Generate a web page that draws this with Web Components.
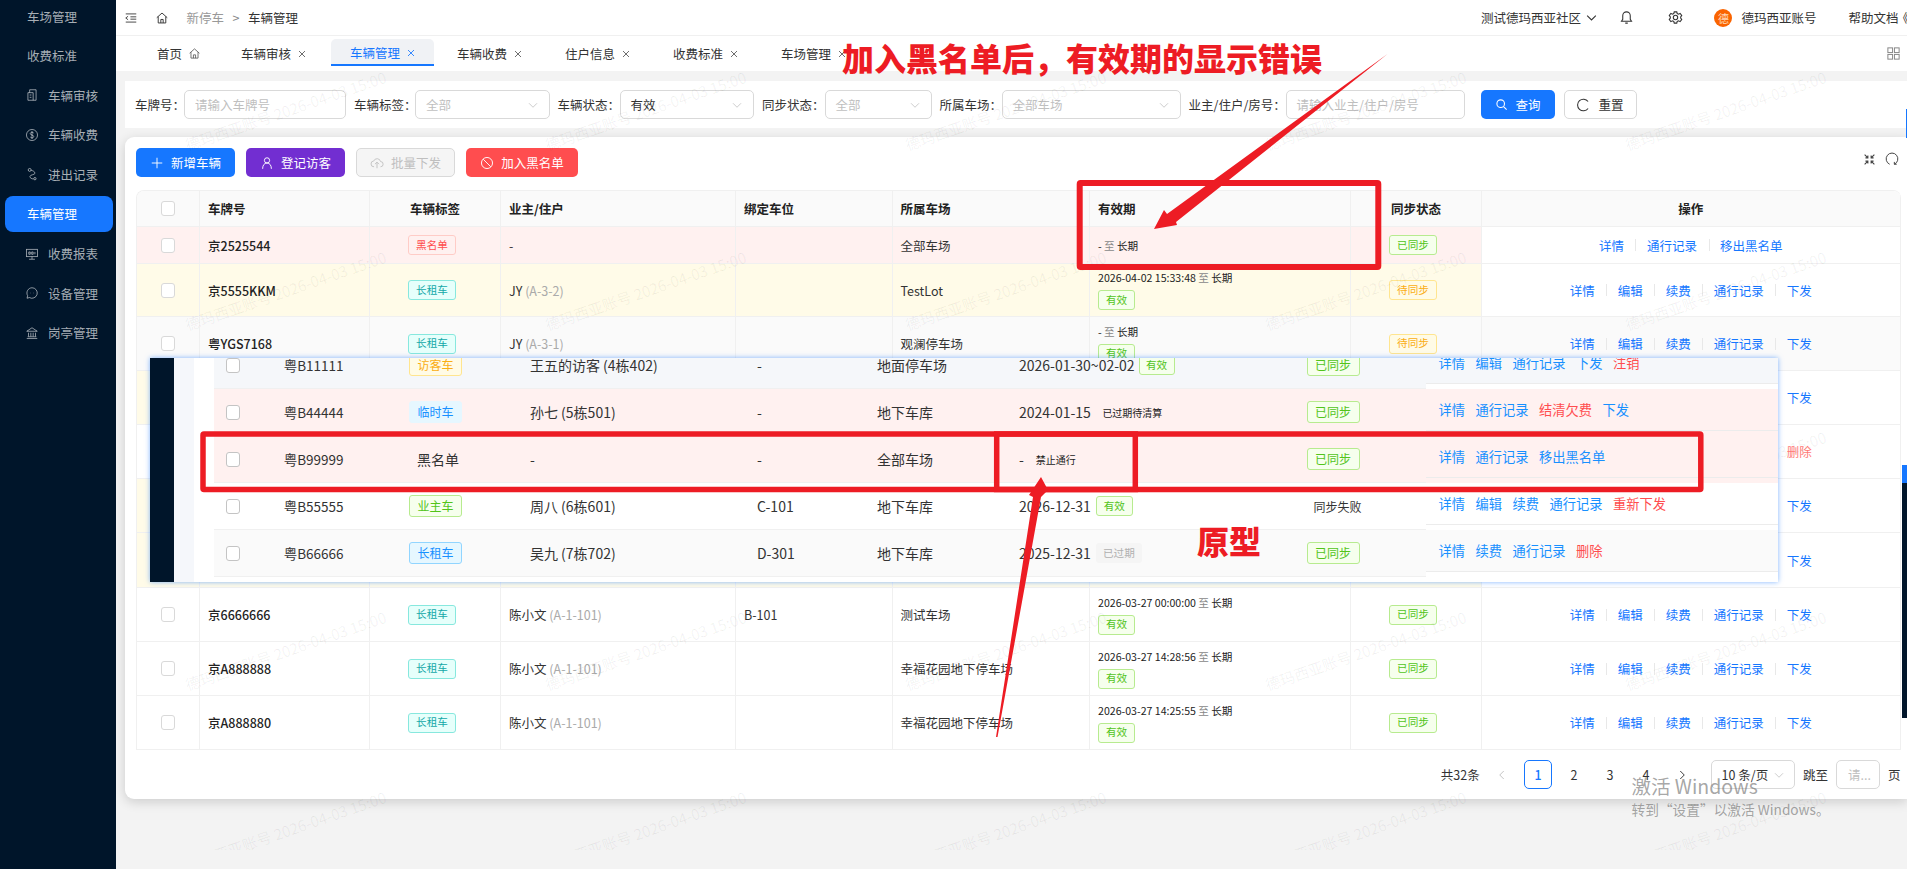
<!DOCTYPE html>
<html lang="zh">
<head>
<meta charset="utf-8">
<title>车辆管理</title>
<style>
html,body{margin:0;padding:0;}
body{position:relative;width:1907px;height:869px;overflow:hidden;background:#f3f3f3;color:#333;font-family:"Noto Sans CJK SC","Noto Sans",sans-serif;font-size:12.5px;}
</style>
</head>
<body>

<park-app>
  <park-sidebar slot="side">
    <side-item>车场管理</side-item>
    <side-item>收费标准</side-item>
    <side-item icon="audit">车辆审核</side-item>
    <side-item icon="dollar">车辆收费</side-item>
    <side-item icon="route">进出记录</side-item>
    <side-item active>车辆管理</side-item>
    <side-item icon="monitor">收费报表</side-item>
    <side-item icon="chat">设备管理</side-item>
    <side-item icon="bank">岗亭管理</side-item>
  </park-sidebar>
  <park-header></park-header>
  <park-tabs></park-tabs>
  <filter-bar></filter-bar>
  <data-card>
    <veh-table></veh-table>
    <page-bar></page-bar>
  </data-card>
</park-app>

<water-mark></water-mark>
<proto-shot></proto-shot>
<red-notes></red-notes>

<script>
const ICONS = {
    fold: '<path d="M3 5h18M11 10h10M11 14h10M3 19h18M7 9l-4 3 4 3"/>',
    home: '<path d="M3 11.5l9-8 9 8M5.5 9.5v11h13v-11M10 20.5v-6h4v6"/>',
    close: '<path d="M6 6l12 12M18 6L6 18"/>',
    chev: '<path d="M4 8.5l8 8 8-8"/>',
    bell: '<path d="M12 3a6 6 0 0 1 6 6v6l2 3H4l2-3V9a6 6 0 0 1 6-6zM10 21h4"/>',
    gear: '<path d="M10 3h4l.7 2.6 2.3 1 2.4-1.3 2.6 3.4-1.7 2.3v2l1.7 2.3-2.6 3.4-2.4-1.3-2.3 1-.7 2.6h-4l-.7-2.6-2.3-1-2.4 1.3-2.6-3.4 1.7-2.3v-2L2 8.7l2.6-3.4L7 6.6l2.3-1z"/><circle cx="12" cy="12" r="3.5"/>',
    audit: '<path d="M8 8V3h11v18H5V8h9v13M8 12h3M8 16h3"/>',
    dollar: '<circle cx="12" cy="12" r="9.5"/><path d="M15 8.8c-.7-1-1.7-1.5-3-1.5-1.700 0-3 1-3 2.300 0 3.200 6 1.800 6 5 0 1.400-1.300 2.400-3 2.400-1.300 0-2.400-.6-3-1.600M12 5.300v13.400"/>',
    route: '<circle cx="8" cy="5" r="2.500"/><path d="M10.500 5.500c3 1 7 2.500 6.500 5.500-.5 2.500-8 2-8.500 5s3.500 4.500 6 4.500"/><circle cx="17" cy="20" r="2"/>',
    monitor: '<rect x="2.500" y="4" width="19" height="12.500"/><path d="M6.500 12.500v-4h2.500v4zM11.500 8.500v4h2.500v-4zM17 8.500v4M12 16.500v4M7 21h10"/>',
    chat: '<path d="M12 3a9 9 0 1 1-4.500 16.800L3.500 21l1-4.500A9 9 0 0 1 12 3z"/><path d="M9 12h.6M14.400 12h.6"/>',
    bank: '<path d="M3 9l9-6 9 6zM6 11.500v6.500M10 11.500v6.500M14 11.500v6.500M18 11.500v6.500M4.500 18.500h15M3 21.500h18"/>',
    plus: '<path d="M12 3v18M3 12h18"/>',
    user: '<circle cx="12" cy="7.500" r="4.500"/><path d="M4.500 22c0-5.500 2.500-10 7.500-10s7.500 4.500 7.500 10"/>',
    cloud: '<path d="M7 18.500a5 5 0 0 1-.5-10 6 6 0 0 1 11.500 1 4.500 4.500 0 0 1 0 9M12 21v-10M8.500 14l3.500-3.500 3.500 3.500"/>',
    ban: '<circle cx="12" cy="12" r="9.500"/><path d="M5.500 5.500l13 13"/>',
    search: '<circle cx="10.500" cy="10.500" r="7"/><path d="M15.800 15.800L21.500 21.500"/>',
    reload: '<path d="M19 6a10 10 0 1 0 0 12"/>',
    fit: '<path d="M3 3l6 6M9 4.500V9H4.500M21 3l-6 6M15 4.500V9h4.500M3 21l6-6M9 19.500V15H4.500M21 21l-6-6M15 19.500V15h4.500"/>',
    spin: '<path d="M8 21A10 10 0 1 1 16 21M16 17v4h4"/>',
    grid: '<rect x="3" y="3" width="7.500" height="7.500"/><rect x="13.500" y="3" width="7.500" height="7.500"/><rect x="3" y="13.500" width="7.500" height="7.500"/><rect x="13.500" y="13.500" width="7.500" height="7.500"/>',
    left: '<path d="M15.500 4l-8 8 8 8"/>',
    right: '<path d="M8.500 4l8 8-8 8"/>'
};

function icon(name, size, width) {
    return '<svg class="ico" width="' + size + '" height="' + size + '" viewBox="0 0 24 24" fill="none" stroke="currentColor" stroke-width="' + (width || 1.7) + '" style="flex:none;display:block">' + ICONS[name] + '</svg>';
}

// shared base: open shadow root, own style, own markup
class Part extends HTMLElement {
    constructor() {
        super();
        this.attachShadow({ mode: 'open' });
    }
    connectedCallback() {
        this.shadowRoot.innerHTML = '<style>:host,*{box-sizing:border-box;}' + this.css() + '</style>' + this.markup();
    }
    css() { return ':host{display:block;}'; }
    markup() { return '<slot></slot>'; }
}

class ParkApp extends Part {
    css() {
        return ':host{display:flex;width:1907px;height:869px;}' +
            '.side{flex:0 0 116px;height:100%;}' +
            '.main{flex:1;min-width:0;display:flex;flex-direction:column;}';
    }
    markup() { return '<div class="side"><slot name="side"></slot></div><div class="main"><slot></slot></div>'; }
}

class ParkSidebar extends Part {
    css() { return ':host{display:block;height:100%;background:#00152a;overflow:hidden;}.w{display:flex;flex-direction:column;gap:3.600px;margin-top:-2px;}'; }
    markup() { return '<div class="w"><slot></slot></div>'; }
}

class SideItem extends Part {
    css() {
        return ':host{display:flex;align-items:center;gap:9px;height:36px;margin:0 3px 0 5px;padding-left:22px;border-radius:8px;color:rgba(255,255,255,.66);}' +
            ':host([icon]){padding-left:20px;}' +
            ':host([active]){background:#1677ff;color:#fff;}';
    }
    markup() {
        const name = this.getAttribute('icon');
        return (name ? icon(name, 14, 1.4) : '') + '<slot></slot>';
    }
}

class StTag extends Part {
    css() {
        return ':host{display:inline-flex;align-items:center;justify-content:center;height:20px;padding:0 7px;border:1px solid #d9d9d9;border-radius:3px;font-size:10.6px;line-height:1;white-space:nowrap;vertical-align:middle;}' +
            ':host([kind=red]){background:#fff1f0;border-color:#ffccc7;color:#ff4d4f;}' +
            ':host([kind=teal]){background:#e6fffb;border-color:#87e8de;color:#13a8a8;}' +
            ':host([kind=green]){background:#f6ffed;border-color:#b7eb8f;color:#52c41a;}' +
            ':host([kind=gold]){background:#fffbe6;border-color:#ffe58f;color:#faad14;}' +
            ':host([kind=blue]){background:#e6f7ff;border-color:#91d5ff;color:#1890ff;}' +
            ':host([kind=sky]){background:#e6f7ff;border-color:#e6f7ff;color:#1890ff;}' +
            ':host([kind=gray]){background:#f5f5f5;border-color:#f5f5f5;color:#b0b0b0;}' +
            ':host([big]){height:22px;font-size:12px;width:53px;padding:0;}';
    }
}

class ParkHeader extends Part {
    css() {
        return ':host{display:flex;align-items:center;flex:none;height:36px;padding:0 0 0 8px;background:#fff;border-bottom:1px solid #f0f0f0;overflow:hidden;color:#333;}' +
            '.home{margin-left:17px;}.crumb{margin-left:17.500px;color:#999;}.sep{margin:0 8.500px;color:#888;}' +
            '.right{display:flex;align-items:center;margin-left:auto;margin-right:-2px;white-space:nowrap;}' +
            '.av{width:18px;height:18px;border-radius:50%;background:#fa6400;color:#ffd9b8;font-size:11px;display:flex;align-items:center;justify-content:center;}';
    }
    markup() {
        return icon('fold', 14, 1.5) + '<span class="home">' + icon('home', 14, 1.6) + '</span>' +
            '<span class="crumb">新停车</span><span class="sep">&gt;</span><span>车辆管理</span>' +
            '<div class="right"><span>测试德玛西亚社区</span><span style="margin-left:4px">' + icon('chev', 13, 2) + '</span>' +
            '<span style="margin-left:21.500px">' + icon('bell', 15, 1.7) + '</span>' +
            '<span style="margin-left:34px">' + icon('gear', 15, 1.7) + '</span>' +
            '<span class="av" style="margin-left:31px">德</span><span style="margin-left:9px">德玛西亚账号</span>' +
            '<span style="margin-left:32px">帮助文档</span><span style="margin-left:-2px">《</span></div>';
    }
}

class ParkTabs extends Part {
    css() {
        return ':host{display:flex;flex:none;align-items:flex-start;height:35px;padding:3px 6px 0 23px;background:#fff;color:#333;gap:5px;}' +
            '.t{display:flex;align-items:center;gap:5px;height:27px;padding:2px 18px 0;white-space:nowrap;border-radius:5px 5px 0 0;}' +
            '.t svg{color:#555;}' +
            '.t.on{background:#f0f2f5;color:#1677ff;border-bottom:2px solid #1677ff;padding-top:2px;width:103px;padding-left:19px;}' +
            '.t.on svg{color:#1677ff;}' +
            '.g{margin-left:auto;align-self:center;margin-top:-3px;color:#888;}';
    }
    markup() {
        const names = ['车辆审核', '车辆管理', '车辆收费', '住户信息', '收费标准', '车场管理'];
        let h = '<div class="t" style="padding-right:17px;gap:6px">首页' + icon('home', 13, 1.5) + '</div>';
        names.forEach(n => {
            h += '<div class="t' + (n === '车辆管理' ? ' on' : '') + '">' + n + icon('close', 12, 1.7) + '</div>';
        });
        return h + '<span class="g">' + icon('grid', 15, 1.6) + '</span>';
    }
}

class FilterBar extends Part {
    css() {
        return ':host{display:flex;flex:none;align-items:center;gap:8px;height:47px;margin:10px 0 0 9px;padding-left:10px;background:#fff;white-space:nowrap;}' +
            '.it{display:flex;align-items:center;color:#333;}' +
            '.c{display:flex;align-items:center;justify-content:space-between;height:29px;padding:0 10px;border:1px solid #d9d9d9;border-radius:5px;background:#fff;color:#bfbfbf;}' +
            '.c.v{color:#333;}.c svg{color:#bbb;}' +
            '.b{display:flex;align-items:center;justify-content:center;gap:7px;height:29px;border-radius:5px;}' +
            '.b.p{width:74px;margin-left:8px;background:#1677ff;color:#fff;}' +
            '.b.d{width:73px;margin-left:1px;background:#fff;border:1px solid #d9d9d9;color:#333;}';
    }
    markup() {
        const items = [
            ['车牌号：', 49, 162, '请输入车牌号', 0],
            ['车辆标签：', 61, 134.5, '全部', 1],
            ['车辆状态：', 62, 134.5, '有效', 2],
            ['同步状态：', 62.5, 107, '全部', 1],
            ['所属车场：', 62, 179, '全部车场', 1],
            ['业主/住户/房号：', 97, 179.5, '请输入业主/住户/房号', 0]
        ];
        let h = '';
        items.forEach(i => {
            h += '<div class="it"><span style="width:' + i[1] + 'px">' + i[0] + '</span>' +
                '<div class="c' + (i[4] === 2 ? ' v' : '') + '" style="width:' + i[2] + 'px"><span>' + i[3] + '</span>' +
                (i[4] ? icon('chev', 12, 1.5) : '') + '</div></div>';
        });
        return h + '<div class="b p">' + icon('search', 13, 2) + '查询</div><div class="b d">' + icon('reload', 14, 1.8) + '重置</div>';
    }
}

class DataCard extends Part {
    css() {
        return ':host{display:flex;flex-direction:column;flex:none;height:662px;margin:9px 0 0 9px;padding:11px 6.500px 0 11px;background:#fff;border-radius:9px 0 0 9px;box-shadow:0 3px 12px rgba(0,0,0,.16);}' +
            '.bar{display:flex;align-items:center;gap:11px;height:29px;margin-bottom:13px;}' +
            '.b{display:flex;align-items:center;justify-content:center;gap:7px;width:99px;height:29px;border-radius:5px;color:#fff;}' +
            '.tools{margin-left:auto;display:flex;gap:9px;align-items:center;color:#444;margin-top:-7px;margin-right:2px;}';
    }
    markup() {
        return '<div class="bar">' +
            '<div class="b" style="background:#1677ff">' + icon('plus', 14, 1.6) + '新增车辆</div>' +
            '<div class="b" style="background:#722ed1">' + icon('user', 14, 1.6) + '登记访客</div>' +
            '<div class="b" style="background:#f5f5f5;border:1px solid #d9d9d9;color:#bfbfbf">' + icon('cloud', 14, 1.5) + '批量下发</div>' +
            '<div class="b" style="background:#ff4d4f;width:112px">' + icon('ban', 14, 1.6) + '加入黑名单</div>' +
            '<div class="tools">' + icon('fit', 13, 2) + icon('spin', 14, 1.7) + '</div></div><slot></slot>';
    }
}

const COLS = '64px 170px 131px 235px 156.5px 197.5px 261px 131px 1fr';
const OPS5 = ['详情', '编辑', '续费', '通行记录', '下发'];

class VehTable extends Part {
    css() {
        return ':host{display:block;flex:none;border:1px solid #f0f0f0;border-bottom:0;border-right:0;border-radius:8px 8px 0 0;overflow:hidden;}' +
            '.r{display:grid;grid-template-columns:' + COLS + ';margin-left:-1px;}' +
            '.r>div{display:flex;align-items:center;padding:0 8px;border-right:1px solid #f0f0f0;border-bottom:1px solid #f0f0f0;min-width:0;white-space:nowrap;}' +
            '.h>div{background:#fafafa;font-weight:700;color:#222;}' +
            '.h .ce{justify-content:center;}' +
            '.ck{justify-content:center;padding:0 !important;}' +
            '.box{width:14px;height:15px;border:1px solid #d9d9d9;border-radius:3px;background:#fff;}' +
            '.pl{font-weight:500;color:#222;}' +
            '.tg{justify-content:center;padding:0 6px 0 0 !important;}' +
            '.v{flex-direction:column;align-items:flex-start !important;justify-content:center;gap:5px;font-size:10.6px;line-height:15px;color:#222;}' +
            '.v i{font-style:normal;color:#888;}' +
            '.o{color:#aaa;}' +
            '.op{justify-content:center;background:#fff;color:#1677ff;padding:0 !important;}' +
            '.op span+span{margin-left:11.500px;padding-left:11.500px;background:linear-gradient(#e8e8e8,#e8e8e8) 0 50%/1px 12px no-repeat;}' +
            '.op .off{visibility:hidden;}.op .off+span{background:none;}' +
            '.op .bad{color:#ff7875;}';
    }
    row(d) {
        const ops = d.ops.map(o => {
            const off = d.only && d.only !== o;
            const bad = o === '删除';
            return '<span class="' + (off ? 'off' : '') + (bad ? ' bad' : '') + '">' + o + '</span>';
        }).join('');
        const c = 'background:' + d.bg;
        const s = d.plate === undefined;
        let own = '';
        if (d.own) own = '<span>' + d.own + (d.unit ? ' <span class="o">' + d.unit + '</span>' : '') + '</span>';
        let valid = '';
        if (d.from) valid = '<div>' + d.from + ' <i>至</i> 长期</div>' + (d.ok ? '<st-tag kind="green">有效</st-tag>' : '');
        return '<div class="r" style="height:' + d.h + 'px">' +
            '<div class="ck" style="' + c + '">' + (s ? '' : '<div class="box"></div>') + '</div>' +
            '<div class="pl" style="' + c + '">' + (d.plate || '') + '</div>' +
            '<div class="tg" style="' + c + '">' + (d.tag ? '<st-tag kind="' + d.tk + '">' + d.tag + '</st-tag>' : '') + '</div>' +
            '<div style="' + c + '">' + own + '</div>' +
            '<div style="' + c + '">' + (d.bay || '') + '</div>' +
            '<div style="' + c + '">' + (d.lot || '') + '</div>' +
            '<div class="v" style="' + c + '">' + valid + '</div>' +
            '<div class="tg" style="' + c + '">' + (d.sync ? '<st-tag kind="' + d.sk + '">' + d.sync + '</st-tag>' : '') + '</div>' +
            '<div class="op" style="background:' + (d.opbg || '#fff') + '">' + ops + '</div></div>';
    }
    markup() {
        const pink = '#fff1f0', yel = '#fffbe8', gray = '#fafafa', white = '#fff';
        const long = { tag: '长租车', tk: 'teal', ok: 1, ops: OPS5 };
        const rows = [
            { h: 37, bg: pink, plate: '京2525544', tag: '黑名单', tk: 'red', own: '-', lot: '全部车场', from: '-', sync: '已同步', sk: 'green', ops: ['详情', '通行记录', '移出黑名单'] },
            Object.assign({ h: 53, bg: yel, plate: '京5555KKM', own: 'JY', unit: '(A-3-2)', lot: 'TestLot', from: '2026-04-02 15:33:48', sync: '待同步', sk: 'gold' }, long),
            Object.assign({ h: 54, bg: gray, opbg: gray, plate: '粤YGS7168', own: 'JY', unit: '(A-3-1)', lot: '观澜停车场', from: '-', sync: '待同步', sk: 'gold' }, long),
            { h: 54, bg: yel, only: '下发', ops: OPS5 },
            { h: 54, bg: white, only: '删除', ops: ['详情', '编辑', '续费', '通行记录', '删除'] },
            { h: 54, bg: yel, only: '下发', ops: OPS5 },
            { h: 55, bg: yel, only: '下发', ops: OPS5 },
            Object.assign({ h: 54, bg: white, plate: '京6666666', own: '陈小文', unit: '(A-1-101)', bay: 'B-101', lot: '测试车场', from: '2026-03-27 00:00:00', sync: '已同步', sk: 'green' }, long),
            Object.assign({ h: 54, bg: white, plate: '京A888888', own: '陈小文', unit: '(A-1-101)', lot: '幸福花园地下停车场', from: '2026-03-27 14:28:56', sync: '已同步', sk: 'green' }, long),
            Object.assign({ h: 54, bg: white, plate: '京A888880', own: '陈小文', unit: '(A-1-101)', lot: '幸福花园地下停车场', from: '2026-03-27 14:25:55', sync: '已同步', sk: 'green' }, long)
        ];
        const head = '<div class="r h" style="height:36px">' +
            '<div class="ck"><div class="box"></div></div><div>车牌号</div><div class="ce">车辆标签</div><div>业主/住户</div><div>绑定车位</div><div>所属车场</div><div>有效期</div><div class="ce">同步状态</div><div class="ce">操作</div></div>';
        return head + rows.map(r => this.row(r)).join('');
    }
}

class PageBar extends Part {
    css() {
        return ':host{display:flex;align-items:center;justify-content:flex-end;height:29px;margin-top:10px;white-space:nowrap;color:#333;}' +
            '.p{display:flex;align-items:center;justify-content:center;width:27.300px;height:29px;margin-left:8.700px;border-radius:5px;}' +
            '.p.on{border:1px solid #1677ff;color:#1677ff;font-weight:500;}' +
            '.s{display:flex;align-items:center;justify-content:space-between;width:84.400px;height:29px;margin-left:15px;padding:0 9px 0 10px;border:1px solid #d9d9d9;border-radius:5px;}' +
            '.s svg{color:#bbb;}' +
            '.i{display:flex;align-items:center;width:44px;height:29px;margin:0 8px;padding-left:11px;border:1px solid #d9d9d9;border-radius:5px;color:#bfbfbf;}';
    }
    markup() {
        return '<span>共32条</span>' +
            '<span class="p" style="color:#bbb">' + icon('left', 12, 1.7) + '</span>' +
            '<span class="p on">1</span><span class="p">2</span><span class="p">3</span><span class="p">4</span>' +
            '<span class="p">' + icon('right', 12, 1.9) + '</span>' +
            '<div class="s"><span>10 条/页</span>' + icon('chev', 12, 1.5) + '</div>' +
            '<span style="margin-left:8px">跳至</span><div class="i">请...</div><span>页</span>';
    }
}

class WaterMark extends Part {
    css() {
        return ':host{position:absolute;left:116px;top:0;width:1791px;height:850px;overflow:hidden;pointer-events:none;z-index:5;}' +
            '.g{display:grid;grid-template-columns:repeat(5,360px);grid-auto-rows:180px;margin:20px 0 0 -10px;}' +
            'span{place-self:center;transform:rotate(-19deg);font-size:15px;white-space:nowrap;color:rgba(0,0,0,.06);}';
    }
    markup() {
        let h = '';
        for (let i = 0; i < 25; i++) h += '<span>德玛西亚账号 2026-04-03 15:00</span>';
        return '<div class="g">' + h + '</div>';
    }
}

// pasted prototype screenshot lying over the table
class ProtoShot extends Part {
    css() {
        return ':host{position:absolute;left:150px;top:358px;width:1628px;height:224px;display:flex;overflow:hidden;background:#fff;z-index:10;box-shadow:0 0 5px rgba(22,119,255,.55);font-size:14px;color:#333;}' +
            '.d{flex:0 0 24px;background:#00152a;}.l{flex:0 0 20px;background:#f5f7fb;}.w{flex:0 0 20px;}' +
            '.tb{flex:0 0 1212px;margin-top:-16px;}.ops{flex:1;margin-top:-16px;color:#1890ff;font-size:13.250px;}' +
            '.r{display:grid;grid-template-columns:69.700px 125.300px 121px 227px 120px 142px 287.600px 1fr;height:47px;border-bottom:1px solid #f0f0f0;}' +
            '.r>div{display:flex;align-items:center;white-space:nowrap;min-width:0;}' +
            '.pl{font-size:13.500px;}' +
            '.box{width:14px;height:15px;margin-left:12px;border:1px solid #c4c4c4;border-radius:3px;background:#fff;}' +
            '.n{font-size:10px;margin-left:11.500px;color:#222;}' +
            '.op{height:47px;}.in{display:flex;align-items:center;gap:10.500px;height:42px;padding-left:12.400px;border-bottom:1px solid #ececec;}' +
            '.bad{color:#ff4d4f;}';
    }
    markup() {
        const t = (k, x) => '<st-tag big kind="' + k + '">' + x + '</st-tag>';
        const rows = [
            ['#f5f7fa', '粤B11111', t('gold', '访客车'), '王五的访客 (4栋402)', '-', '地面停车场', '<span>2026-01-30~02-02</span><st-tag kind="green" style="margin-left:4px;width:36px;padding:0">有效</st-tag>', t('green', '已同步')],
            ['#fff1f0', '粤B44444', t('sky', '临时车'), '孙七 (5栋501)', '-', '地下车库', '<span>2024-01-15</span><span class="n">已过期待清算</span>', t('green', '已同步')],
            ['#fff1f0', '粤B99999', '<span style="margin-left:8px">黑名单</span>', '-', '-', '全部车场', '<span>-</span><span class="n" style="margin-left:12px">禁止通行</span>', t('green', '已同步')],
            ['#fff', '粤B55555', t('green', '业主车'), '周八 (6栋601)', 'C-101', '地下车库', '<span>2026-12-31</span><st-tag kind="green" style="margin-left:5px;width:37px;padding:0">有效</st-tag>', '<span style="margin-left:7px;font-size:12px">同步失败</span>'],
            ['#fafafa', '粤B66666', t('blue', '长租车'), '吴九 (7栋702)', 'D-301', '地下车库', '<span>2025-12-31</span><st-tag kind="gray" style="margin-left:5px;width:46px;padding:0">已过期</st-tag>', t('green', '已同步')]
        ];
        const ops = [
            ['#fff', '#f5f7fa', ['详情', '编辑', '通行记录', '下发', '!注销']],
            ['#fff1f0', '#fff1f0', ['详情', '通行记录', '!结清欠费', '下发']],
            ['#fff1f0', '#fff1f0', ['详情', '通行记录', '移出黑名单']],
            ['#fff', '#fff', ['详情', '编辑', '续费', '通行记录', '!重新下发']],
            ['#fff', '#fafafa', ['详情', '续费', '通行记录', '!删除']]
        ];
        const left = rows.map(r => '<div class="r" style="background:' + r[0] + '"><div><div class="box"></div></div><div class="pl">' + r[1] + '</div><div>' + r[2] + '</div><div>' + r[3] + '</div><div>' + r[4] + '</div><div>' + r[5] + '</div><div>' + r[6] + '</div><div>' + r[7] + '</div></div>').join('');
        const right = ops.map(o => '<div class="op" style="background:' + o[0] + '"><div class="in" style="background:' + o[1] + '">' +
            o[2].map(x => x[0] === '!' ? '<span class="bad">' + x.slice(1) + '</span>' : '<span>' + x + '</span>').join('') + '</div></div>').join('');
        return '<div class="d"></div><div class="l"></div><div class="w"></div><div class="tb">' + left + '</div><div class="ops">' + right + '</div>';
    }
}

class RedNotes extends Part {
    css() {
        return ':host{position:absolute;left:0;top:0;width:1907px;height:869px;z-index:20;pointer-events:none;overflow:hidden;}' +
            'svg{position:absolute;left:0;top:0;}' +
            '.say{position:absolute;color:#ed1c24;font-weight:900;font-size:32px;line-height:1;white-space:nowrap;}' +
            '.win{position:absolute;color:rgba(110,110,110,.62);white-space:nowrap;line-height:1;}' +
            '.bar{position:absolute;}';
    }
    markup() {
        return '<svg width="1907" height="869" fill="none" stroke="#ed1c24">' +
            '<rect x="1079.700" y="183" width="298.600" height="84" stroke-width="6" rx="1"/>' +
            '<rect x="203" y="434" width="1497.800" height="55.500" stroke-width="5.500" rx="1"/>' +
            '<rect x="996.700" y="434" width="138.600" height="55.500" stroke-width="5.500"/>' +
            '<polygon stroke="none" fill="#ed1c24" points="1387.500,54 1176,222 1177,225 1154,229 1164,210 1167,214"/>' +
            '<polygon stroke="none" fill="#ed1c24" points="996,737 1033,497 1029,495 1041,477 1048,490 1041,497 997.500,737"/>' +
            '</svg>' +
            '<div class="say" style="left:842px;top:41px">加入黑名单后，有效期的显示错误</div>' +
            '<div class="say" style="left:1197px;top:524px">原型</div>' +
            '<div class="win" style="left:1631.500px;top:776px;font-size:19.500px">激活 Windows</div>' +
            '<div class="win" style="left:1631.500px;top:803px;font-size:13.700px">转到“设置”以激活 Windows。</div>' +
            '<div class="bar" style="left:1902px;top:465px;width:5px;height:253px;background:linear-gradient(#1677ff 18px,#00152a 18px)"></div>' +
            '<div class="bar" style="left:1906px;top:109px;width:1px;height:29px;background:#1677ff"></div>';
    }
}

customElements.define('park-app', ParkApp);
customElements.define('park-sidebar', ParkSidebar);
customElements.define('side-item', SideItem);
customElements.define('st-tag', StTag);
customElements.define('park-header', ParkHeader);
customElements.define('park-tabs', ParkTabs);
customElements.define('filter-bar', FilterBar);
customElements.define('data-card', DataCard);
customElements.define('veh-table', VehTable);
customElements.define('page-bar', PageBar);
customElements.define('water-mark', WaterMark);
customElements.define('proto-shot', ProtoShot);
customElements.define('red-notes', RedNotes);
</script>
</body>
</html>
